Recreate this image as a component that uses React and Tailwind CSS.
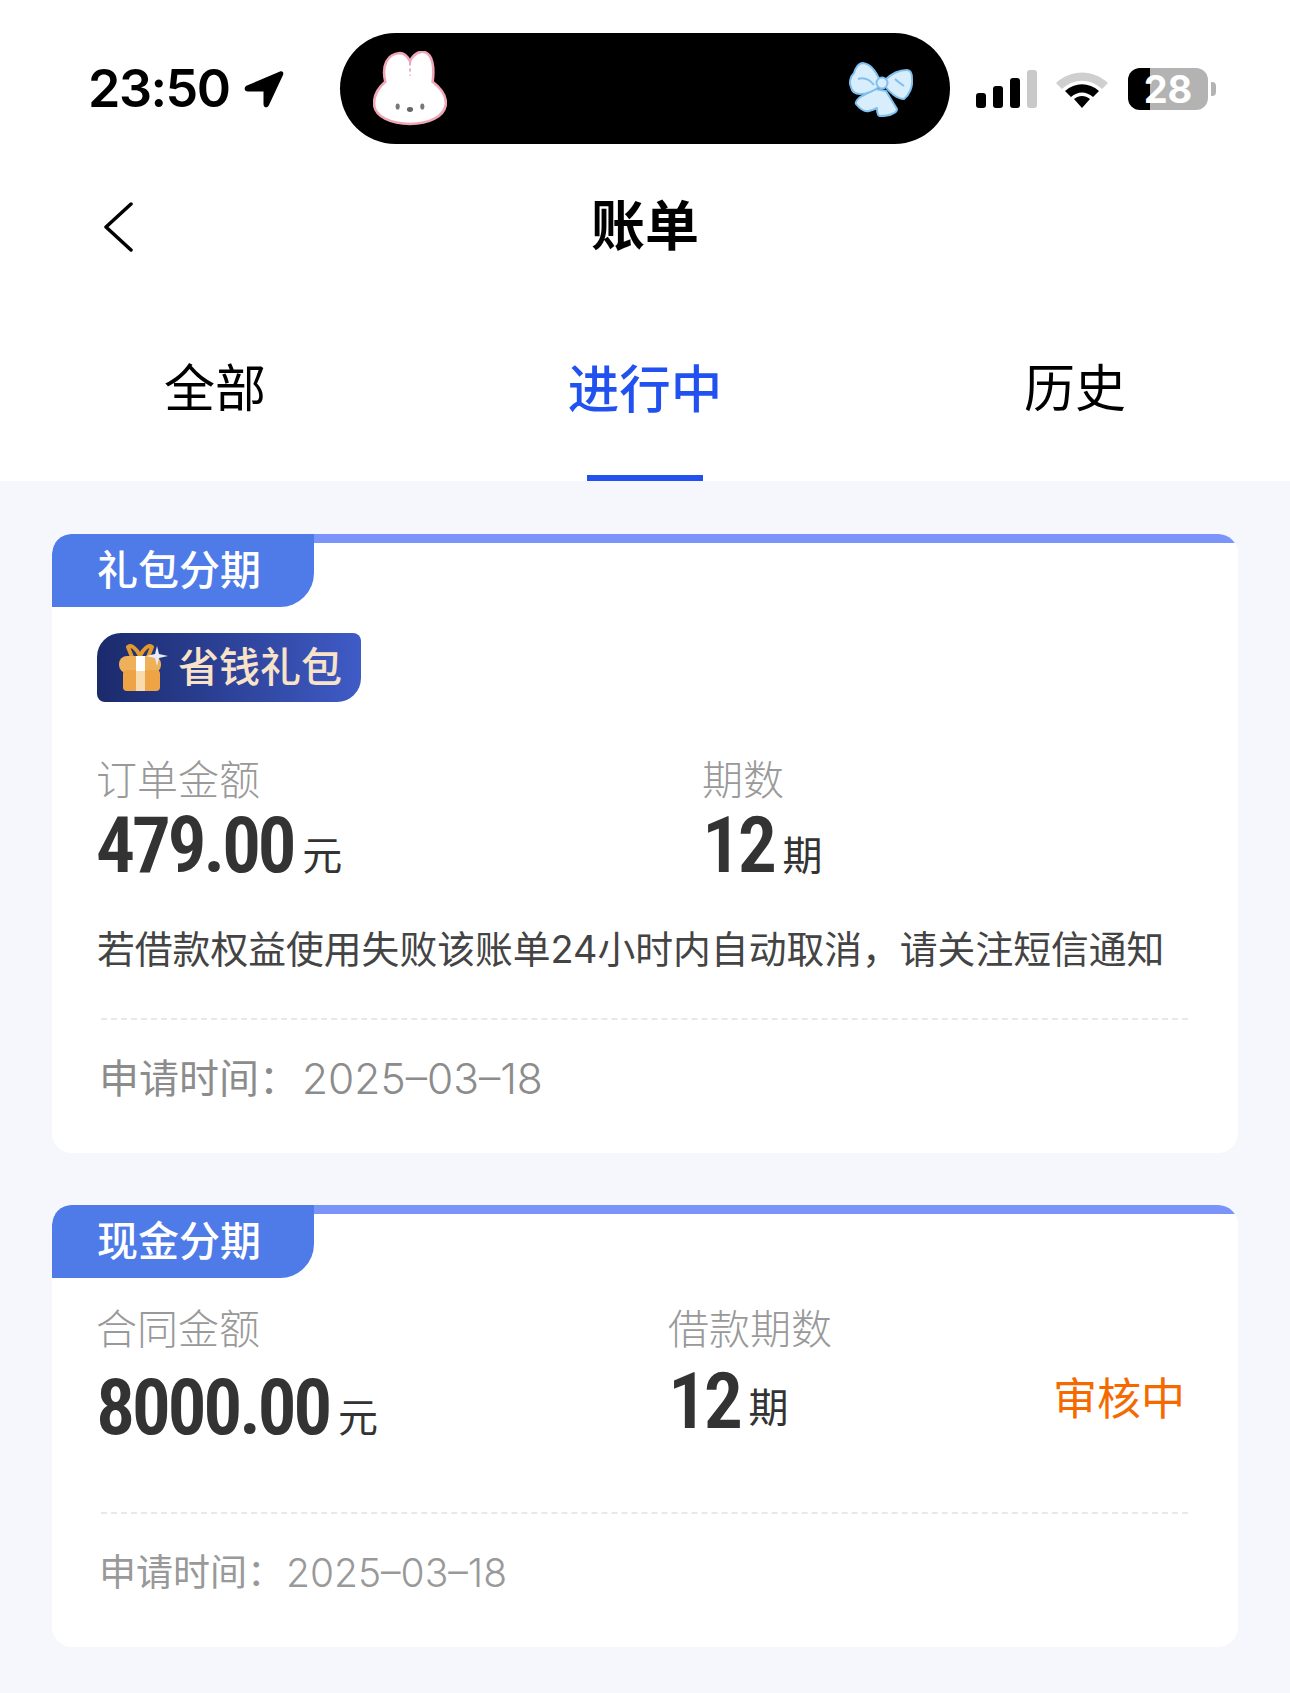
const Bunny = () => (
    <svg width="74" height="75" viewBox="0 0 72 73">
        <path
            d="M12 30C8 14 14 3 26 2C31 2 34 6 36 10C39 3 45 0 50 1C58 3 60 16 58 30C66 36 71 44 71 51C70 64 54 71 36 71C18 71 1 64 1 51C1 43 6 35 12 30Z"
            fill="#fff"
            stroke="#efa6b6"
            strokeWidth="2.500"
        />
        <path d="M36 11V24" stroke="#ef8fa3" strokeWidth="1.500" strokeDasharray="3 3" />
        <ellipse cx="24" cy="54" rx="2" ry="3" fill="#777" />
        <ellipse cx="48" cy="54" rx="2" ry="3" fill="#777" />
        <ellipse cx="36" cy="57" rx="3" ry="2.400" fill="#666" />
    </svg>
);

const Bow = () => (
    <svg width="64" height="56" viewBox="0 0 64 56">
        <g fill="#d9eefc" stroke="#7fc0ee" strokeWidth="2" strokeLinejoin="round">
            <path d="M26 28L13 35C9 37 6 41 7 43C11 48 16 51 20 50C24 49 26 48 28 47C28 51 29 55 31 55C36 55 41 54 43 53C46 52 48 50 48 48L37 30Z" />
            <path d="M31 20C27 10 21 3 14 2C9 2 6 8 5 12C1 16 0 22 2 26C3 31 7 33 11 33C19 33 26 29 30 26Z" />
            <path d="M36 19C42 13 50 9 58 9C62 9 63 13 63 18C64 26 60 34 55 38C48 38 40 31 36 25Z" />
            <circle cx="33" cy="22" r="5.500" />
        </g>
        <path d="M9 18C15 16 21 19 25 24M46 18C49 21 52 23 55 25" fill="none" stroke="#7fc0ee" strokeWidth="2" />
    </svg>
);

const LocationArrow = () => (
    <svg width="41" height="40" viewBox="0 0 41 40" className="ml-[16px]">
        <path
            d="M36 2.500C38.500 1.500 40 3.500 39 6L25 36C23.500 39.500 19.500 39 19.500 35L19.500 22.500L4 22.500C0 22.500 -0.500 18 3 16.500Z"
            fill="#000"
        />
    </svg>
);

const Signal = () => (
    <div className="flex items-end gap-[7px] h-[38px] ml-[26px]">
        <div className="w-[10px] h-[15px] rounded-[3px] bg-black" />
        <div className="w-[10px] h-[22px] rounded-[3px] bg-black" />
        <div className="w-[10px] h-[30px] rounded-[3px] bg-black" />
        <div className="w-[10px] h-[38px] rounded-[3px] bg-[#c9c9c9]" />
    </div>
);

const Wifi = () => (
    <svg width="54" height="40" viewBox="0 0 54 40" className="ml-[18px]">
        <path d="M1 14C16 0 38 0 53 14L47 20C35 9 19 9 7 20Z" fill="#cfcfcf" />
        <path d="M10 22C20 13 34 13 44 22L38 28C31 22 23 22 16 28Z" fill="#000" />
        <path d="M19 30C24 26 30 26 35 30L27 39Z" fill="#000" />
    </svg>
);

const Battery = () => (
    <div className="flex items-center ml-[19px]">
        <div className="w-[80px] h-[42px] rounded-[12px] flex items-center justify-center text-white text-[38px] font-bold leading-none bg-[linear-gradient(to_right,#000_0,#000_22px,#b3b3b3_22px,#b3b3b3_100%)]">
            28
        </div>
        <div className="w-[5px] h-[14px] ml-[3px] rounded-r-[4px] bg-[#b3b3b3]" />
    </div>
);

const BackIcon = () => (
    <svg width="30" height="50" viewBox="0 0 30 50" fill="none">
        <path d="M28 2L3 25L28 48" stroke="#000" strokeWidth="3.500" strokeLinecap="round" strokeLinejoin="round" />
    </svg>
);

const GiftIcon = () => (
    <svg width="50" height="47" viewBox="0 0 50 47">
        <path d="M13 13L9 3C12 0 18 5 21 12C24 5 30 0 33 3L29 13" fill="none" stroke="#e39a2c" strokeWidth="4" strokeLinejoin="round" />
        <rect x="0" y="12" width="42" height="17" rx="8" fill="#efb05a" />
        <rect x="4" y="26" width="37" height="21" rx="4" fill="#eea444" />
        <rect x="17" y="12" width="9" height="15" fill="#fff" />
        <rect x="17" y="27" width="9" height="20" fill="#f9dcae" />
        <path d="M38 2L40 10L49 12L40 14L38 22L36 14L27 12L36 10Z" fill="#e9ecf8" />
    </svg>
);

const Tag = ({ children }) => (
    <div className="w-[262px] h-[73px] pl-[45px] flex items-center bg-[#4e7be8] rounded-tl-[20px] rounded-br-[34px] text-white text-[41px] font-medium leading-none">
        {children}
    </div>
);

const Card = ({ title, className, children }) => (
    <div className={`bg-white rounded-[20px] overflow-hidden ${className}`}>
        <div className="h-[73px] bg-[linear-gradient(to_bottom,#7a94fa_9px,#fff_9px)]">
            <Tag>{title}</Tag>
        </div>
        {children}
    </div>
);

const Amount = ({ value, unit, unitClass = 'mb-[5px]' }) => (
    <div className="flex items-end h-[80px]">
        <span className="font-['Liberation_Sans_Narrow','Roboto_Condensed','Liberation_Sans',sans-serif] font-semibold text-[78px] leading-[80px] tracking-[-3.500px] text-[#333]">
            {value}
        </span>
        <span className={`ml-[9px] text-[40px] leading-[50px] text-[#333] ${unitClass}`}>{unit}</span>
    </div>
);

const Label = ({ children }) => (
    <div className="text-[41px] leading-[50px] font-light text-[#999]">{children}</div>
);

const Dashed = () => <div className="ml-[49px] mr-[50px] border-t-2 border-dashed border-[#e8e8e8]" />;

const TimeRow = ({ className, dateClass, children }) => (
    <div className={`flex items-center pl-[47px] leading-[50px] ${className}`}>
        <span>申请时间：</span>
        <span className={`font-light ${dateClass}`}>{children}</span>
    </div>
);

export default function App() {
    return (
        <div className="w-[1290px] h-[1693px] bg-[#f5f7fc] font-['Inter','Noto_Sans_CJK_SC',sans-serif]">
            <div className="bg-white h-[481px]">
                <div className="h-[177px] flex items-center pl-[88px]">
                    <span className="w-[140px] text-[52px] font-semibold tracking-[-1.500px] leading-none text-black">23:50</span>
                    <LocationArrow />
                    <div className="ml-[55px] w-[610px] h-[111px] rounded-[56px] bg-black flex items-center justify-between pl-[33px] pr-[37px]">
                        <Bunny />
                        <Bow />
                    </div>
                    <Signal />
                    <Wifi />
                    <Battery />
                </div>
                <div className="h-[99px] grid grid-cols-[1fr_auto_1fr] items-center">
                    <div className="pl-[103px]">
                        <BackIcon />
                    </div>
                    <div className="text-[54px] font-bold leading-none text-black">账单</div>
                    <div />
                </div>
                <div className="h-[205px] grid grid-cols-3">
                    <div className="pt-[85px] text-center text-[51px] leading-[56px] text-black">全部</div>
                    <div className="flex flex-col items-center justify-between pt-[85px]">
                        <div className="text-[51.500px] leading-[56px] font-medium text-[#2152f0]">进行中</div>
                        <div className="w-[116px] h-[6px] bg-[#2152f0]" />
                    </div>
                    <div className="pt-[85px] text-center text-[51px] leading-[56px] text-black">历史</div>
                </div>
            </div>

            <div className="px-[52px] pt-[53px] flex flex-col gap-[52px]">
                <Card title="礼包分期" className="h-[619px]">
                    <div className="pl-[45px] pt-[26px]">
                        <div className="w-[264px] h-[69px] flex items-center pl-[22px] rounded-tl-[24px] rounded-br-[24px] rounded-tr-[8px] rounded-bl-[8px] bg-[linear-gradient(to_right,#1b2a6b,#3f5bc6)]">
                            <GiftIcon />
                            <span className="ml-[9px] text-[41px] font-medium leading-none text-[#f8e3c8]">省钱礼包</span>
                        </div>
                    </div>
                    <div className="pl-[44px] pt-[53px] flex">
                        <div className="w-[606px]">
                            <Label>订单金额</Label>
                            <div className="mt-[1px]">
                                <Amount value="479.00" unit="元" />
                            </div>
                        </div>
                        <div>
                            <Label>期数</Label>
                            <div className="mt-[1px]">
                                <Amount value="12" unit="期" />
                            </div>
                        </div>
                    </div>
                    <div className="pl-[45px] mt-[35px] text-[37.800px] leading-[56px] text-[#444] whitespace-nowrap">
                        若借款权益使用失败该账单24小时内自动取消，请关注短信通知
                    </div>
                    <div className="mt-[41px]">
                        <Dashed />
                    </div>
                    <TimeRow className="mt-[34px] text-[40px] text-[#8c8c8c]" dateClass="ml-[3px] text-[42.500px]">
                        2025–03–18
                    </TimeRow>
                </Card>

                <Card title="现金分期" className="h-[442px]">
                    <div className="pl-[44px] pr-[53px] pt-[26px] flex">
                        <div className="w-[572px]">
                            <Label>合同金额</Label>
                            <div className="mt-[14px]">
                                <Amount value="8000.00" unit="元" />
                            </div>
                        </div>
                        <div>
                            <Label>借款期数</Label>
                            <div className="mt-[8px]">
                                <Amount value="12" unit="期" unitClass="mb-[9px]" />
                            </div>
                        </div>
                        <div className="ml-auto mt-[70px] text-[44px] leading-[50px] text-[#f56a00]">审核中</div>
                    </div>
                    <div className="mt-[64px]">
                        <Dashed />
                    </div>
                    <TimeRow className="mt-[34px] text-[37px] text-[#999]" dateClass="ml-[2px] text-[39px]">
                        2025–03–18
                    </TimeRow>
                </Card>
            </div>
        </div>
    );
}
